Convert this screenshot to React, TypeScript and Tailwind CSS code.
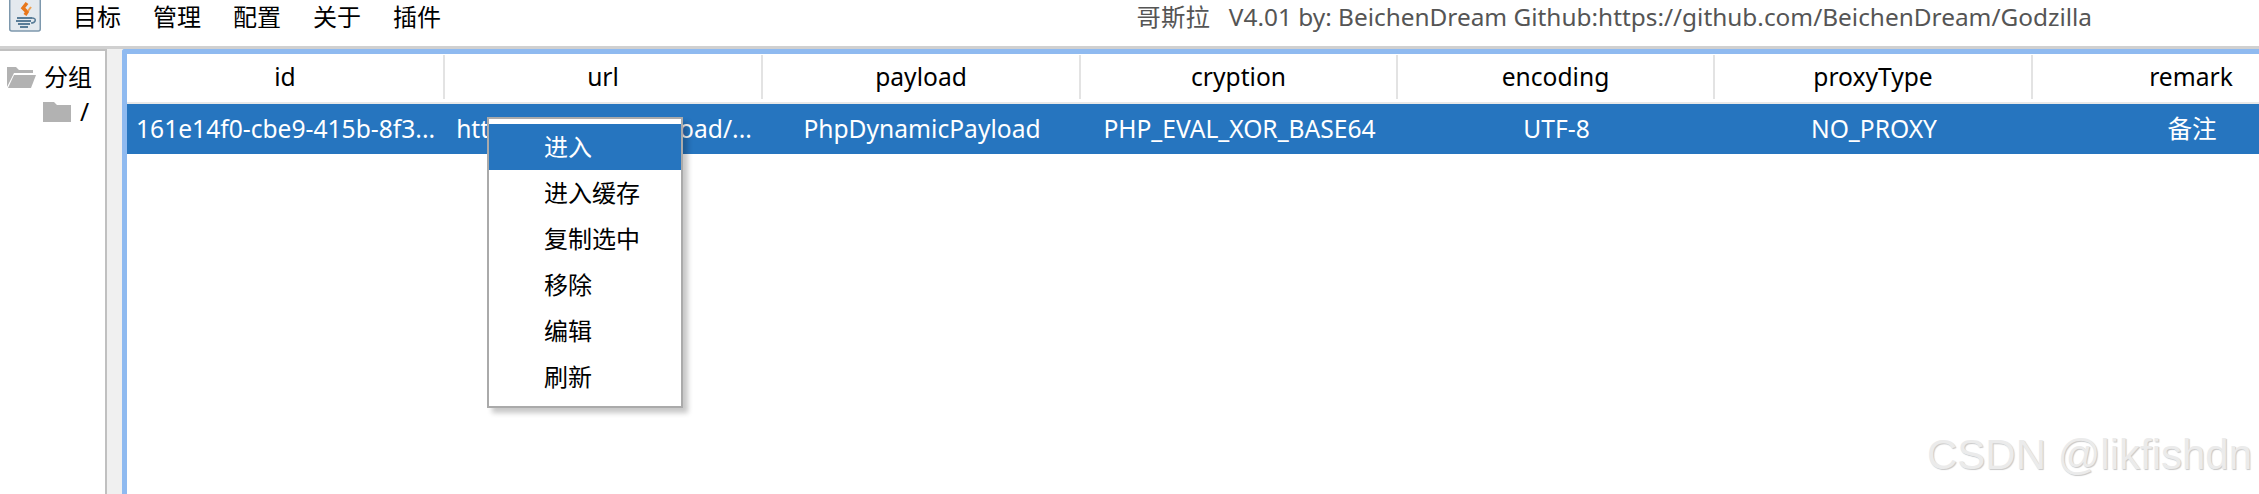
const FONT = "font-['Noto_Sans','Noto_Sans_CJK_SC',sans-serif]";

const menus = ["目标", "管理", "配置", "关于", "插件"];
const columns = ["id", "url", "payload", "cryption", "encoding", "proxyType", "remark"];
const row = [
  "161e14f0-cbe9-415b-8f3...",
  "http://127.0.0.1/upload/...",
  "PhpDynamicPayload",
  "PHP_EVAL_XOR_BASE64",
  "UTF-8",
  "NO_PROXY",
  "备注",
];
const popup = ["进入", "进入缓存", "复制选中", "移除", "编辑", "刷新"];

const JavaIcon = () => (
  <svg width="33" height="32" viewBox="0 0 33 32" className="block">
    <rect x="0.75" y="-2" width="30.5" height="33" rx="2" fill="#e4e9ee" stroke="#7d98ad" strokeWidth="1.5" />
    <path d="M18 3 L14 8 L18 12 L16 15" fill="none" stroke="#e8761a" strokeWidth="3.5" />
    <path d="M22 7 L19 11" stroke="#f0a050" strokeWidth="2" />
    <path d="M8 18 H23 M7 21 H22 M9 24 H21 M11 27 H19" stroke="#5a7d98" strokeWidth="1.8" />
    <path d="M23 18 C28 18 27 23 22 23" fill="none" stroke="#5a7d98" strokeWidth="1.5" />
  </svg>
);

const OpenFolder = () => (
  <svg width="29" height="22" viewBox="0 0 29 22" className="block">
    <path d="M0 21 V1 H9 L12 4 H26 V7 H7 Z" fill="#b2b2b2" />
    <path d="M7 9 H29 L24 22 H1 Z" fill="#b2b2b2" />
  </svg>
);

const ClosedFolder = () => (
  <svg width="28" height="20" viewBox="0 0 28 20" className="block">
    <path d="M0 0 H11 L14 3 H28 V20 H0 Z" fill="#b2b2b2" />
  </svg>
);

export default function App() {
  return (
    <div className={`relative w-[2259px] h-[494px] overflow-hidden bg-white text-black text-[24.6px] ${FONT}`}>
      <div className="flex items-start h-[46px] bg-white">
        <div className="ml-[9px] w-[33px]">
          <JavaIcon />
        </div>
        <div className="flex ml-[15px] h-[34px] items-center text-[24px]">
          {menus.map((m) => (
            <span key={m} className="px-[16px] leading-[34px]">
              {m}
            </span>
          ))}
        </div>
        <div className="ml-auto mr-[167px] h-[34px] leading-[34px] text-[#555555] whitespace-pre text-[24.4px]">
          哥斯拉{"   "}V4.01 by: BeichenDream Github:https://github.com/BeichenDream/Godzilla
        </div>
      </div>

      <div className="flex h-[448px] border-t-[3px] border-[#d0d0d0] bg-[#f0f0f0]">
        <div className="w-[107px] shrink-0 bg-white border-r-[2px] border-t-[2px] border-[#c0c0c0] pt-[11px]">
          <div className="flex items-center h-[30px] pl-[7px] gap-[8px] text-[24px]">
            <OpenFolder />
            <span className="leading-[30px]">分组</span>
          </div>
          <div className="flex items-center h-[30px] mt-[5px] pl-[43px] gap-[9px]">
            <ClosedFolder />
            <span className="leading-[30px]">/</span>
          </div>
        </div>

        <div className="ml-[15px] flex-1 min-w-0 overflow-hidden bg-white border-l-[5px] border-t-[5px] border-[#8fbaf0] rounded-tl-[3px]">
          <div className="flex w-[2240px] h-[50px] border-b-[2px] border-[#e8e8e8]">
            {columns.map((c, i) => (
              <div
                key={c}
                className={`flex items-center justify-center shrink-0 h-[44px] mt-[1px] border-r-[2px] border-[#e3e3e3] ${
                  i === 3 || i === 4 ? "w-[317px]" : "w-[318px]"
                }`}
              >
                {c}
              </div>
            ))}
          </div>
          <div className="flex w-[2240px] h-[50px] bg-[#2675bf] text-white">
            {row.map((c, i) => (
              <div
                key={i}
                className={`flex items-center shrink-0 whitespace-nowrap overflow-hidden ${
                  i === 0
                    ? "w-[318px] pl-[9px]"
                    : i === 3 || i === 4
                      ? "w-[317px] justify-center"
                      : "w-[318px] justify-center"
                }`}
              >
                {c}
              </div>
            ))}
          </div>
        </div>
      </div>

      <div className="absolute left-[487px] top-[117px] w-[196px] h-[291px] bg-white border-[2px] border-[#aaaaaa] pt-[5px] text-[24px] shadow-[5px_5px_5px_rgba(0,0,0,0.22)]">
        {popup.map((p, i) => (
          <div
            key={p}
            className={`h-[46px] leading-[46px] pl-[55px] ${i === 0 ? "bg-[#2675bf] text-white" : ""}`}
          >
            {p}
          </div>
        ))}
      </div>

      <div className="absolute left-[1927px] top-[430px] text-[42px] leading-[50px] whitespace-nowrap text-[#ebebeb] font-['Liberation_Sans',sans-serif] [text-shadow:1px_1px_1px_#c8c8c8]">
        CSDN @likfishdn
      </div>
    </div>
  );
}
